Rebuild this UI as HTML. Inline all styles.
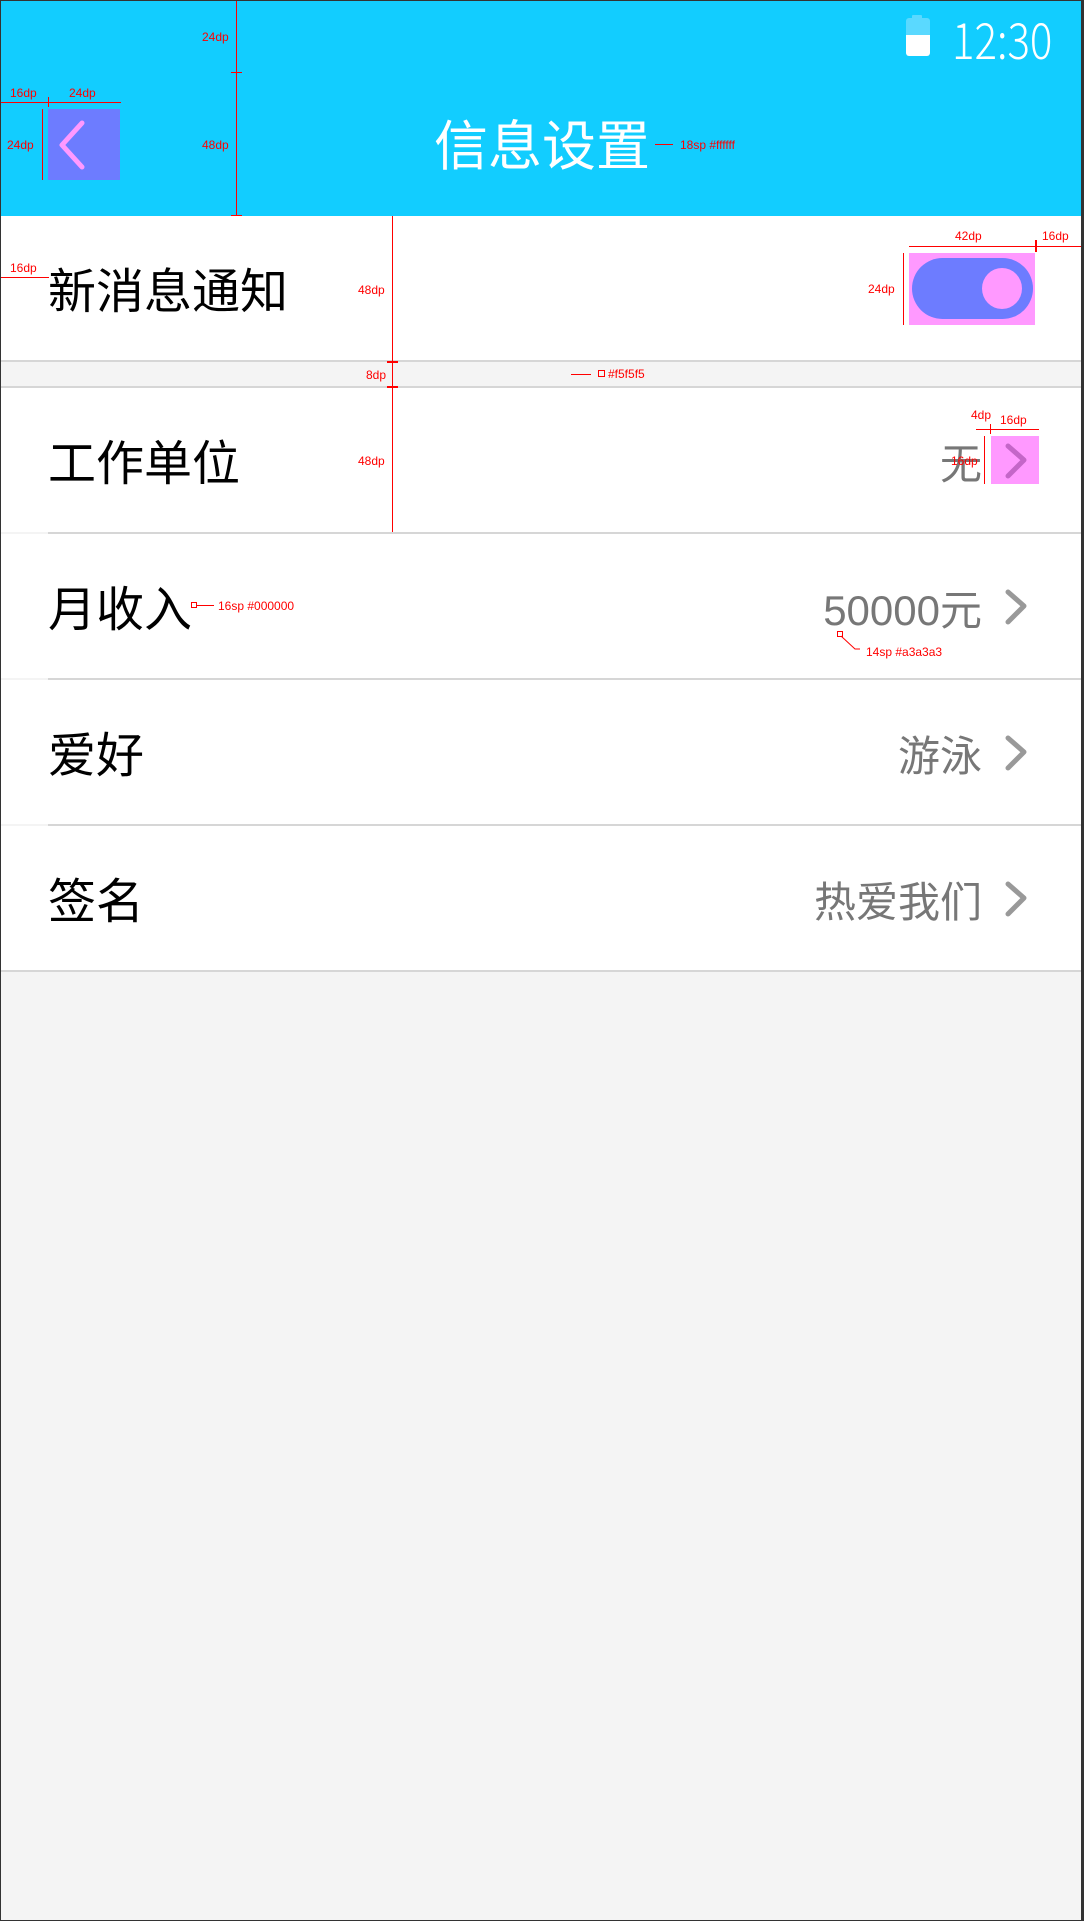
<!DOCTYPE html>
<html><head><meta charset="utf-8">
<style>
*{margin:0;padding:0;box-sizing:border-box}
html,body{width:1084px;height:1921px;overflow:hidden;background:#f4f4f4;font-family:"Liberation Sans","Noto Sans CJK SC",sans-serif}
.a{position:absolute}
.row{position:absolute;left:0;width:1082px;height:144px;background:#fff}
.lab{position:absolute;left:48px;top:5px;height:144px;line-height:144px;font-size:48px;color:#000}
.val{position:absolute;right:100px;top:5px;height:144px;line-height:144px;font-size:42px;color:#777;text-align:right}
.ln{position:absolute;height:2px;background:#d6d6d6}
.r{color:#f00;font-size:12px;position:absolute;font-family:"Liberation Sans",sans-serif;white-space:nowrap}
.rl{position:absolute;background:#f00}
</style></head><body>
<div class="a" style="left:0;top:0;width:1084px;height:1921px;border:1px solid #333;border-right:3px solid #333;z-index:20;pointer-events:none"></div>
<div class="a" style="left:0;top:0;width:1084px;height:216px;background:#12cdff"></div>
<div class="a" style="left:912px;top:15px;width:10px;height:4px;background:#5ad9ff;border-radius:1px"></div>
<div class="a" style="left:906px;top:18px;width:24px;height:38px;border-radius:3px;background:linear-gradient(#5ad9ff 0 45%,#fff 45%)"></div>
<div class="a" style="left:952px;top:6px;height:64px;line-height:64px;font-size:50px;color:#fff;font-family:'Noto Sans CJK SC','Liberation Sans',sans-serif;font-weight:300;transform:scaleX(0.84);transform-origin:left">12:30</div>
<div class="a" style="left:48px;top:109px;width:72px;height:71px;background:#6d7cff"></div>
<svg class="a" style="left:48px;top:109px" width="72" height="72"><polyline points="34,14 14,36 34,58" fill="none" stroke="#ff99ff" stroke-width="5" stroke-linecap="round" stroke-linejoin="round"/></svg>
<div class="a" style="left:0;top:111px;width:1084px;text-align:center;height:72px;line-height:72px;font-size:54px;color:#fff;font-family:'Liberation Sans','Noto Sans CJK SC',sans-serif">信息设置</div>

<div class="row" style="top:216px"><div class="lab">新消息通知</div></div>
<div class="ln" style="left:0;top:360px;width:1082px"></div>
<div class="a" style="left:909px;top:253px;width:126px;height:72px;background:#ff99ff"></div>
<div class="a" style="left:912px;top:258px;width:121px;height:61px;background:#6d7cff;border-radius:31px"></div>
<div class="a" style="left:982px;top:268px;width:40px;height:41px;background:#ff99ff;border-radius:50%"></div>
<div class="ln" style="left:0;top:386px;width:1082px"></div>

<div class="row" style="top:388px"><div class="lab">工作单位</div><div class="val">无</div></div>
<div class="a" style="left:991px;top:436px;width:48px;height:48px;background:#ff99ff"></div>
<div class="ln" style="left:48px;top:532px;width:1034px"></div>
<div class="row" style="top:534px"><div class="lab">月收入</div><div class="val">50000元</div></div>
<div class="ln" style="left:48px;top:678px;width:1034px"></div>
<div class="row" style="top:680px"><div class="lab">爱好</div><div class="val">游泳</div></div>
<div class="ln" style="left:48px;top:824px;width:1034px"></div>
<div class="row" style="top:826px"><div class="lab">签名</div><div class="val">热爱我们</div></div>
<div class="ln" style="left:0;top:970px;width:1082px"></div>

<svg class="a" style="left:991px;top:436px" width="48" height="48"><polyline points="17,10 33,24 17,40" fill="none" stroke="#c466c8" stroke-width="5" stroke-linecap="round" stroke-linejoin="round"/></svg>
<svg class="a" style="left:991px;top:582px" width="48" height="48"><polyline points="17,10 33,24 17,40" fill="none" stroke="#999" stroke-width="5" stroke-linecap="round" stroke-linejoin="round"/></svg>
<svg class="a" style="left:991px;top:728px" width="48" height="48"><polyline points="17,10 33,24 17,40" fill="none" stroke="#999" stroke-width="5" stroke-linecap="round" stroke-linejoin="round"/></svg>
<svg class="a" style="left:991px;top:874px" width="48" height="48"><polyline points="17,10 33,24 17,40" fill="none" stroke="#999" stroke-width="5" stroke-linecap="round" stroke-linejoin="round"/></svg>

<div class="rl" style="left:236px;top:0;width:1px;height:216px"></div>
<div class="rl" style="left:231px;top:72px;width:11px;height:1px"></div>
<div class="rl" style="left:231px;top:215px;width:11px;height:1px"></div>
<div class="r" style="left:202px;top:30px">24dp</div>
<div class="r" style="left:202px;top:138px">48dp</div>
<div class="rl" style="left:0;top:102px;width:121px;height:1px"></div>
<div class="rl" style="left:48px;top:97px;width:1px;height:10px"></div>
<div class="r" style="left:10px;top:86px">16dp</div>
<div class="r" style="left:69px;top:86px">24dp</div>
<div class="rl" style="left:42px;top:109px;width:1px;height:71px"></div>
<div class="r" style="left:7px;top:138px">24dp</div>
<div class="rl" style="left:655px;top:144px;width:18px;height:1px"></div>
<div class="r" style="left:680px;top:138px">18sp #ffffff</div>

<div class="rl" style="left:0;top:277px;width:49px;height:1px"></div>
<div class="r" style="left:10px;top:261px">16dp</div>
<div class="rl" style="left:392px;top:216px;width:1px;height:316px"></div>
<div class="rl" style="left:387px;top:361px;width:11px;height:2px"></div>
<div class="rl" style="left:387px;top:386px;width:11px;height:2px"></div>
<div class="r" style="left:358px;top:283px">48dp</div>
<div class="r" style="left:366px;top:368px">8dp</div>
<div class="r" style="left:358px;top:454px">48dp</div>
<div class="rl" style="left:571px;top:374px;width:20px;height:1px"></div>
<div class="a" style="left:598px;top:370px;width:7px;height:7px;border:1px solid #f00"></div>
<div class="r" style="left:608px;top:367px">#f5f5f5</div>
<div class="rl" style="left:909px;top:246px;width:175px;height:1px"></div>
<div class="rl" style="left:1035px;top:240px;width:2px;height:12px"></div>
<div class="r" style="left:955px;top:229px">42dp</div>
<div class="r" style="left:1042px;top:229px">16dp</div>
<div class="rl" style="left:903px;top:253px;width:1px;height:72px"></div>
<div class="r" style="left:868px;top:282px">24dp</div>

<div class="rl" style="left:976px;top:429px;width:63px;height:1px"></div>
<div class="rl" style="left:990px;top:424px;width:1px;height:10px"></div>
<div class="r" style="left:971px;top:408px">4dp</div>
<div class="r" style="left:1000px;top:413px">16dp</div>
<div class="rl" style="left:984px;top:436px;width:1px;height:48px"></div>
<div class="r" style="left:951px;top:454px">16dp</div>

<div class="a" style="left:191px;top:602px;width:6px;height:6px;border:1px solid #f00"></div>
<div class="rl" style="left:197px;top:605px;width:17px;height:1px"></div>
<div class="r" style="left:218px;top:599px">16sp #000000</div>
<div class="a" style="left:837px;top:631px;width:6px;height:6px;border:1px solid #f00"></div>
<svg class="a" style="left:838px;top:634px" width="30" height="20"><polyline points="3,2 17,15 22,15" fill="none" stroke="#f00" stroke-width="1"/></svg>
<div class="r" style="left:866px;top:645px">14sp #a3a3a3</div>
</body></html>
